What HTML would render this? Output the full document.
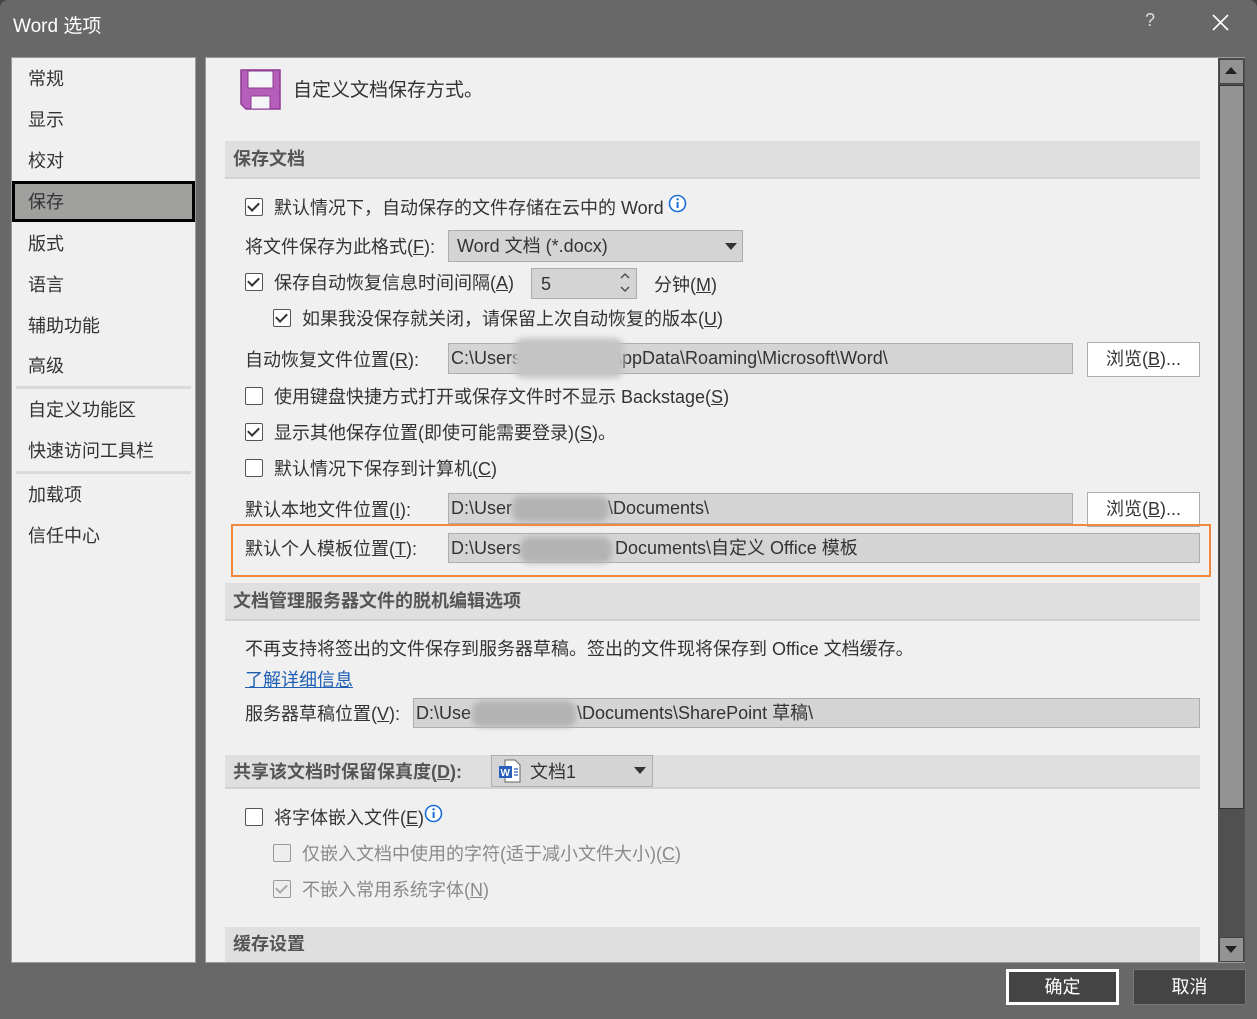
<!DOCTYPE html>
<html><head><meta charset="utf-8"><style>
*{margin:0;padding:0;box-sizing:border-box}
body{width:1257px;height:1019px;background:#454545;overflow:hidden;font-family:"Liberation Sans","Noto Sans CJK SC",sans-serif;font-size:18px;color:#333}
.win{position:absolute;left:0;top:0;width:1257px;height:1019px;background:#686868;border-radius:8px 8px 0 0}
.a{position:absolute;white-space:nowrap}
.t{position:absolute;white-space:nowrap;line-height:24px;transform:translateY(1px)}
.cb{position:absolute;width:18px;height:18px;border:1.5px solid #555;background:#fff;border-radius:2px}
.cb.c::after{content:"";position:absolute;left:4px;top:1px;width:5px;height:9px;border:solid #333;border-width:0 2px 2px 0;transform:rotate(45deg)}
.cb.d{border-color:#999;background:#eee}
.cb.d.c::after{border-color:#aaa}
.hd{position:absolute;left:225px;width:975px;background:#dfdfdf;border-bottom:2px solid #d2d2d2;font-weight:bold;color:#555;padding-left:8px}
.fld{position:absolute;background:#d4d4d4;border:1px solid #adadad;padding-left:2px;line-height:29px}
.btn{position:absolute;background:#fff;border:1px solid #adadad;text-align:center;line-height:33px}
.blur{position:absolute;background:#b3b3b3;filter:blur(3px);border-radius:10px}
u{text-decoration:underline}
</style></head><body>
<div class="win">
<div class="a" style="left:13px;top:11px;color:#fff;font-size:19px">Word 选项</div>
<div class="a" style="left:1145px;top:10px;color:#ddd;font-size:18px">?</div>
<svg class="a" style="left:1212px;top:14px" width="17" height="17"><path d="M1 1L16 16M16 1L1 16" stroke="#fff" stroke-width="1.6"/></svg>

<div class="a" style="left:11px;top:57px;width:185px;height:906px;background:#f0f0f0;border:1px solid #9a9a9a"></div>
<div class="a" style="left:12px;top:181px;width:183px;height:41px;background:#a0a09f;border:3px solid #000"></div>
<div class="t" style="left:28px;top:66px">常规</div>
<div class="t" style="left:28px;top:107px">显示</div>
<div class="t" style="left:28px;top:148px">校对</div>
<div class="t" style="left:28px;top:189px">保存</div>
<div class="t" style="left:28px;top:231px">版式</div>
<div class="t" style="left:28px;top:272px">语言</div>
<div class="t" style="left:28px;top:313px">辅助功能</div>
<div class="t" style="left:28px;top:353px">高级</div>
<div class="a" style="left:16px;top:386px;width:175px;height:3px;background:#dadada"></div>
<div class="t" style="left:28px;top:397px">自定义功能区</div>
<div class="t" style="left:28px;top:438px">快速访问工具栏</div>
<div class="a" style="left:16px;top:471px;width:175px;height:3px;background:#dadada"></div>
<div class="t" style="left:28px;top:482px">加载项</div>
<div class="t" style="left:28px;top:523px">信任中心</div>

<div class="a" style="left:205px;top:57px;width:1040px;height:906px;background:#f0f0f0;border:1px solid #9a9a9a;overflow:hidden"></div>
<div class="a" style="left:1218px;top:58px;width:27px;height:904px;background:#505050"></div>
<div class="a" style="left:1219px;top:59px;width:25px;height:25px;background:#939393;border:1px solid #444"></div>
<svg class="a" style="left:1225px;top:67px" width="12" height="8"><path d="M0 7L6 0L12 7Z" fill="#222"/></svg>
<div class="a" style="left:1219px;top:85px;width:25px;height:724px;background:#939393;border:1px solid #333"></div>
<div class="a" style="left:1219px;top:937px;width:25px;height:25px;background:#939393;border:1px solid #444"></div>
<svg class="a" style="left:1225px;top:946px" width="12" height="8"><path d="M0 0L6 7L12 0Z" fill="#222"/></svg>

<svg class="a" style="left:240px;top:69px" width="41" height="41"><path d="M1 1H40V40H6L1 35Z" fill="#b65fba" stroke="#8e3a93" stroke-width="1.5"/><rect x="8" y="2" width="25" height="17" fill="#f3f5f6" stroke="#8e3a93"/><rect x="11" y="27" width="19" height="13" fill="#f3f5f6" stroke="#8e3a93"/></svg>
<div class="t" style="left:293px;top:78px;font-size:19px">自定义文档保存方式。</div>

<div class="hd" style="top:141px;height:38px;line-height:37px">保存文档</div>
<div class="cb c" style="left:245px;top:198px"></div>
<div class="t" style="left:274px;top:195px">默认情况下，自动保存的文件存储在云中的 Word</div>
<svg class="a" style="left:668px;top:194px" width="19" height="19"><circle cx="9.5" cy="9.5" r="8" fill="#fff" stroke="#1a6ed8" stroke-width="1.6"/><rect x="8.6" y="8" width="2" height="6" fill="#1a6ed8"/><circle cx="9.6" cy="5.3" r="1.2" fill="#1a6ed8"/></svg>

<div class="t" style="left:245px;top:234px">将文件保存为此格式(<u>F</u>):</div>
<div class="fld" style="left:448px;top:230px;width:295px;height:32px;padding-left:8px;line-height:31px">Word 文档 (*.docx)</div>
<svg class="a" style="left:725px;top:243px" width="12" height="7"><path d="M0 0H12L6 7Z" fill="#333"/></svg>

<div class="cb c" style="left:245px;top:273px"></div>
<div class="t" style="left:274px;top:270px">保存自动恢复信息时间间隔(<u>A</u>)</div>
<div class="fld" style="left:531px;top:268px;width:106px;height:31px;padding-left:9px;line-height:31px">5</div>
<svg class="a" style="left:619px;top:271px" width="12" height="24"><path d="M2 7L6 3L10 7M2 16L6 20L10 16" stroke="#444" stroke-width="1.3" fill="none"/></svg>
<div class="t" style="left:654px;top:272px">分钟(<u>M</u>)</div>

<div class="cb c" style="left:273px;top:309px"></div>
<div class="t" style="left:302px;top:306px">如果我没保存就关闭，请保留上次自动恢复的版本(<u>U</u>)</div>

<div class="t" style="left:245px;top:347px">自动恢复文件位置(<u>R</u>):</div>
<div class="fld" style="left:448px;top:343px;width:625px;height:31px">C:\Users<span style="display:inline-block;width:96px"></span>\ppData\Roaming\Microsoft\Word\</div>
<div class="blur" style="left:514px;top:338px;width:110px;height:40px;background:#c4c4c4"></div>
<div class="btn" style="left:1087px;top:342px;width:113px;height:35px">浏览(<u>B</u>)...</div>

<div class="cb" style="left:245px;top:387px"></div>
<div class="t" style="left:274px;top:384px">使用键盘快捷方式打开或保存文件时不显示 Backstage(<u>S</u>)</div>
<div class="cb c" style="left:245px;top:423px"></div>
<div class="t" style="left:274px;top:420px">显示其他保存位置(即使可能需要登录)(<u>S</u>)。</div>
<div class="cb" style="left:245px;top:459px"></div>
<div class="t" style="left:274px;top:456px">默认情况下保存到计算机(<u>C</u>)</div>

<div class="t" style="left:245px;top:497px">默认本地文件位置(<u>I</u>):</div>
<div class="fld" style="left:448px;top:493px;width:625px;height:31px">D:\User<span style="display:inline-block;width:96px"></span>\Documents\</div>
<div class="blur" style="left:512px;top:496px;width:97px;height:26px"></div>
<div class="btn" style="left:1087px;top:492px;width:113px;height:35px">浏览(<u>B</u>)...</div>

<div class="a" style="left:231px;top:524px;width:980px;height:53px;border:2px solid #f0883e"></div>
<div class="t" style="left:245px;top:536px">默认个人模板位置(<u>T</u>):</div>
<div class="fld" style="left:448px;top:533px;width:752px;height:30px">D:\Users<span style="display:inline-block;width:94px"></span>Documents\自定义 Office 模板</div>
<div class="blur" style="left:520px;top:537px;width:92px;height:26px"></div>

<div class="hd" style="top:583px;height:38px;line-height:37px">文档管理服务器文件的脱机编辑选项</div>
<div class="t" style="left:245px;top:636px">不再支持将签出的文件保存到服务器草稿。签出的文件现将保存到 Office 文档缓存。</div>
<div class="t" style="left:245px;top:667px;color:#1f5fb4"><u>了解详细信息</u></div>
<div class="t" style="left:245px;top:701px">服务器草稿位置(<u>V</u>):</div>
<div class="fld" style="left:413px;top:698px;width:787px;height:30px">D:\Use<span style="display:inline-block;width:106px"></span>\Documents\SharePoint 草稿\</div>
<div class="blur" style="left:472px;top:701px;width:104px;height:26px"></div>

<div class="hd" style="top:755px;height:34px;line-height:34px">共享该文档时保留保真度(<u>D</u>):</div>
<div class="fld" style="left:491px;top:755px;width:162px;height:32px;padding-left:38px;line-height:32px">文档1</div>
<svg class="a" style="left:498px;top:759px" width="24" height="24"><path d="M7 1H17L22 6V23H7Z" fill="#fff" stroke="#666"/><rect x="1" y="7" width="13" height="12" fill="#2b5fbd"/><text x="2.5" y="17" font-size="10" font-weight="bold" fill="#fff" font-family="Liberation Sans">W</text><path d="M16 10H20M16 13H20M16 16H20" stroke="#2b5fbd" stroke-width="1.3"/></svg>
<svg class="a" style="left:634px;top:767px" width="12" height="7"><path d="M0 0H12L6 7Z" fill="#333"/></svg>

<div class="cb" style="left:245px;top:808px"></div>
<div class="t" style="left:274px;top:805px">将字体嵌入文件(<u>E</u>)</div>
<svg class="a" style="left:424px;top:804px" width="19" height="19"><circle cx="9.5" cy="9.5" r="8" fill="#fff" stroke="#1a6ed8" stroke-width="1.6"/><rect x="8.6" y="8" width="2" height="6" fill="#1a6ed8"/><circle cx="9.6" cy="5.3" r="1.2" fill="#1a6ed8"/></svg>
<div class="cb d" style="left:273px;top:844px"></div>
<div class="t" style="left:302px;top:841px;color:#8a8a8a">仅嵌入文档中使用的字符(适于减小文件大小)(<u>C</u>)</div>
<div class="cb d c" style="left:273px;top:880px"></div>
<div class="t" style="left:302px;top:877px;color:#8a8a8a">不嵌入常用系统字体(<u>N</u>)</div>

<div class="hd" style="top:927px;height:35px;line-height:35px;border-bottom:none">缓存设置</div>

<div class="a" style="left:1006px;top:969px;width:113px;height:36px;background:#444;border:3px solid #fff;color:#fff;text-align:center;line-height:31px">确定</div>
<div class="a" style="left:1133px;top:969px;width:113px;height:36px;background:#444;border:1px solid #777;color:#fff;text-align:center;line-height:35px">取消</div>
</div>
</body></html>
